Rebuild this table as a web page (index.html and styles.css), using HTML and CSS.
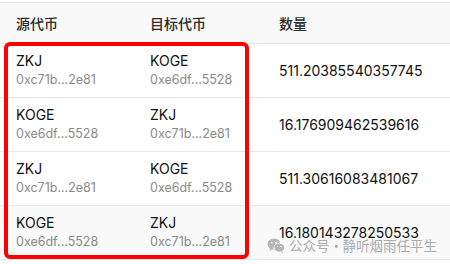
FILE: index.html
```html
<!DOCTYPE html>
<html lang="zh">
<head>
<meta charset="utf-8">
<link rel="stylesheet" href="styles.css">
</head>
<body>
<div class="page">
  <div class="table">
    <div class="row head">
      <div class="cell">源代币</div>
      <div class="cell">目标代币</div>
      <div class="cell">数量</div>
    </div>
    <div class="row">
      <div class="cell"><div class="sym">ZKJ</div><div class="addr">0xc71b...2e81</div></div>
      <div class="cell"><div class="sym">KOGE</div><div class="addr">0xe6df...5528</div></div>
      <div class="cell num">511.20385540357745</div>
    </div>
    <div class="row">
      <div class="cell"><div class="sym">KOGE</div><div class="addr">0xe6df...5528</div></div>
      <div class="cell"><div class="sym">ZKJ</div><div class="addr">0xc71b...2e81</div></div>
      <div class="cell num">16.176909462539616</div>
    </div>
    <div class="row">
      <div class="cell"><div class="sym">ZKJ</div><div class="addr">0xc71b...2e81</div></div>
      <div class="cell"><div class="sym">KOGE</div><div class="addr">0xe6df...5528</div></div>
      <div class="cell num">511.30616083481067</div>
    </div>
    <div class="row shaded">
      <div class="cell"><div class="sym">KOGE</div><div class="addr">0xe6df...5528</div></div>
      <div class="cell"><div class="sym">ZKJ</div><div class="addr">0xc71b...2e81</div></div>
      <div class="cell num">16.180143278250533</div>
    </div>
  </div>
  <div class="highlight"></div>
  <div class="watermark">
    <svg class="wx" width="18" height="15" viewBox="0 0 18 15">
      <ellipse cx="7" cy="6" rx="6.5" ry="5.5" fill="#b5b5b5"/>
      <path d="M3 10.5 L2.5 13 L5.5 11.3 Z" fill="#b5b5b5"/>
      <ellipse cx="12.3" cy="9.6" rx="5.4" ry="4.6" fill="#b5b5b5" stroke="#fff" stroke-width="1"/>
      <path d="M15.2 13.4 L16 15 L13.5 14 Z" fill="#b5b5b5"/>
      <circle cx="4.9" cy="4.6" r="0.9" fill="#fff"/>
      <circle cx="9" cy="4.6" r="0.9" fill="#fff"/>
      <circle cx="10.5" cy="8.6" r="0.75" fill="#fff"/>
      <circle cx="14" cy="8.6" r="0.75" fill="#fff"/>
    </svg>
    <span class="wm-text">公众号<span class="dot">·</span>静听烟雨任平生</span>
  </div>
</div>
</body>
</html>
```

FILE: styles.css
```css
html, body {
  margin: 0;
  padding: 0;
  background: #ffffff;
}
body {
  font-family: Inter, "Noto Sans CJK SC", sans-serif;
  color: #1a1a1a;
  width: 450px;
  height: 264px;
  overflow: hidden;
}
.page {
  position: relative;
  padding-top: 2px;
}
.table {
  border-top: 1px solid #e6e6e6;
}
.row {
  display: grid;
  grid-template-columns: 134px 129px 1fr;
  padding: 0 16px;
  height: 53px;
  align-items: center;
  border-bottom: 1px solid #e6e6e6;
  background: #ffffff;
}
.row.head {
  height: 40px;
  background: #f8f8f8;
  font-size: 14px;
  font-weight: 500;
  color: #2a2a2a;
}
.row.shaded {
  background: #f9f9f9;
}
.cell {
  min-width: 0;
}
.sym {
  font-size: 14px;
  line-height: 18px;
  color: #111;
}
.addr {
  font-size: 12.5px;
  line-height: 18px;
  color: #8a8a8a;
  margin-top: 1px;
}
.num {
  font-size: 14px;
  color: #111;
}
.highlight {
  position: absolute;
  left: 4px;
  top: 42px;
  width: 237px;
  height: 209px;
  border: 4px solid #ff0000;
  border-radius: 6px;
}
.watermark {
  position: absolute;
  left: 267px;
  top: 237px;
  display: flex;
  align-items: center;
  gap: 4px;
  white-space: nowrap;
  font-size: 13.5px;
  line-height: 16px;
  color: rgba(155, 155, 155, 0.85);
  font-family: "Noto Sans CJK SC", sans-serif;
}
.wm-text {
  display: flex;
  align-items: center;
}
.dot {
  display: inline-block;
  width: 13px;
  text-align: center;
}
.wx {
  display: block;
}
```
